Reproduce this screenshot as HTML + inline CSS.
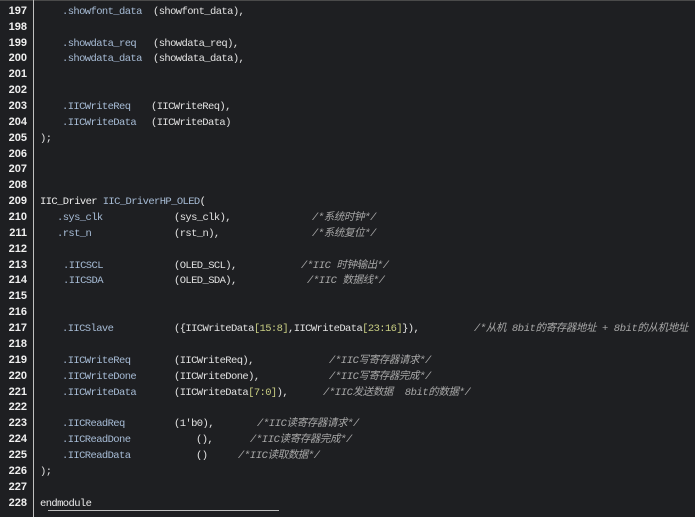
<!DOCTYPE html>
<html><head><meta charset="utf-8"><style>
html,body{margin:0;padding:0;}
body{width:695px;height:517px;background:#1e1f22;position:relative;overflow:hidden;
font-family:"Liberation Mono","Noto Sans CJK SC",monospace;font-size:10.5px;}
.top{position:absolute;left:0;top:0;width:695px;height:1px;background:#4a4a4a;}
.sep{position:absolute;left:33px;top:0;width:1px;height:517px;background:#bfbfbf;}
.n{position:absolute;left:0;width:27px;text-align:right;color:#f0f0f0;font-weight:bold;font-size:11px;line-height:12px;font-family:"Liberation Sans",sans-serif;}
.t{position:absolute;white-space:pre;letter-spacing:-0.6px;line-height:12px;}
.p{color:#a7bcd6;}
.v{color:#e2e2e2;}
.k{color:#ececec;}
.c{color:#a8a8a8;font-style:italic;letter-spacing:-0.4px;}
.y{color:#c8cd82;}
.ul{position:absolute;left:48px;top:510px;width:231px;height:1px;background:#bdbdbd;}
</style></head><body>
<div class="top"></div>
<div class="sep"></div>

<div class="n" style="top:5px">197</div>
<div class="n" style="top:21px">198</div>
<div class="n" style="top:37px">199</div>
<div class="n" style="top:52px">200</div>
<div class="n" style="top:68px">201</div>
<div class="n" style="top:84px">202</div>
<div class="n" style="top:100px">203</div>
<div class="n" style="top:116px">204</div>
<div class="n" style="top:132px">205</div>
<div class="n" style="top:148px">206</div>
<div class="n" style="top:163px">207</div>
<div class="n" style="top:179px">208</div>
<div class="n" style="top:195px">209</div>
<div class="n" style="top:211px">210</div>
<div class="n" style="top:227px">211</div>
<div class="n" style="top:243px">212</div>
<div class="n" style="top:259px">213</div>
<div class="n" style="top:274px">214</div>
<div class="n" style="top:290px">215</div>
<div class="n" style="top:306px">216</div>
<div class="n" style="top:322px">217</div>
<div class="n" style="top:338px">218</div>
<div class="n" style="top:354px">219</div>
<div class="n" style="top:370px">220</div>
<div class="n" style="top:386px">221</div>
<div class="n" style="top:401px">222</div>
<div class="n" style="top:417px">223</div>
<div class="n" style="top:433px">224</div>
<div class="n" style="top:449px">225</div>
<div class="n" style="top:465px">226</div>
<div class="n" style="top:481px">227</div>
<div class="n" style="top:497px">228</div>

<div class="t p" style="left:62px;top:6px">.showfont_data</div><div class="t v" style="left:153px;top:6px">(showfont_data),</div>
<div class="t p" style="left:62px;top:38px">.showdata_req</div><div class="t v" style="left:153px;top:38px">(showdata_req),</div>
<div class="t p" style="left:62px;top:53px">.showdata_data</div><div class="t v" style="left:153px;top:53px">(showdata_data),</div>
<div class="t p" style="left:62px;top:101px">.IICWriteReq</div><div class="t v" style="left:151px;top:101px">(IICWriteReq),</div>
<div class="t p" style="left:62px;top:117px">.IICWriteData</div><div class="t v" style="left:151px;top:117px">(IICWriteData)</div>
<div class="t v" style="left:40px;top:133px">);</div>

<div class="t k" style="left:40px;top:196px">IIC_Driver <span class="p">IIC_DriverHP_OLED</span>(</div>
<div class="t p" style="left:57px;top:212px">.sys_clk</div><div class="t v" style="left:174px;top:212px">(sys_clk),</div><div class="t c" style="left:312px;top:212px">/*系统时钟*/</div>
<div class="t p" style="left:57px;top:228px">.rst_n</div><div class="t v" style="left:174px;top:228px">(rst_n),</div><div class="t c" style="left:312px;top:228px">/*系统复位*/</div>
<div class="t p" style="left:63px;top:260px">.IICSCL</div><div class="t v" style="left:174px;top:260px">(OLED_SCL),</div><div class="t c" style="left:301px;top:260px">/*IIC 时钟输出*/</div>
<div class="t p" style="left:63px;top:275px">.IICSDA</div><div class="t v" style="left:174px;top:275px">(OLED_SDA),</div><div class="t c" style="left:307px;top:275px">/*IIC 数据线*/</div>

<div class="t p" style="left:62px;top:323px">.IICSlave</div><div class="t v" style="left:174px;top:323px">({IICWriteData<span class="y">[15:8]</span>,IICWriteData<span class="y">[23:16]</span>}),</div><div class="t c" style="left:474px;top:323px">/*从机 8bit的寄存器地址 + 8bit的从机地址</div>

<div class="t p" style="left:62px;top:355px">.IICWriteReq</div><div class="t v" style="left:174px;top:355px">(IICWriteReq),</div><div class="t c" style="left:329px;top:355px">/*IIC写寄存器请求*/</div>
<div class="t p" style="left:62px;top:371px">.IICWriteDone</div><div class="t v" style="left:174px;top:371px">(IICWriteDone),</div><div class="t c" style="left:329px;top:371px">/*IIC写寄存器完成*/</div>
<div class="t p" style="left:62px;top:387px">.IICWriteData</div><div class="t v" style="left:174px;top:387px">(IICWriteData<span class="y">[7:0]</span>),</div><div class="t c" style="left:323px;top:387px">/*IIC发送数据  8bit的数据*/</div>

<div class="t p" style="left:62px;top:418px">.IICReadReq</div><div class="t v" style="left:174px;top:418px">(1'b0),</div><div class="t c" style="left:257px;top:418px">/*IIC读寄存器请求*/</div>
<div class="t p" style="left:62px;top:434px">.IICReadDone</div><div class="t v" style="left:196px;top:434px">(),</div><div class="t c" style="left:250px;top:434px">/*IIC读寄存器完成*/</div>
<div class="t p" style="left:62px;top:450px">.IICReadData</div><div class="t v" style="left:196px;top:450px">()</div><div class="t c" style="left:238px;top:450px">/*IIC读取数据*/</div>
<div class="t v" style="left:40px;top:466px">);</div>
<div class="t k" style="left:40px;top:498px">endmodule</div>
<div class="ul"></div>
</body></html>
